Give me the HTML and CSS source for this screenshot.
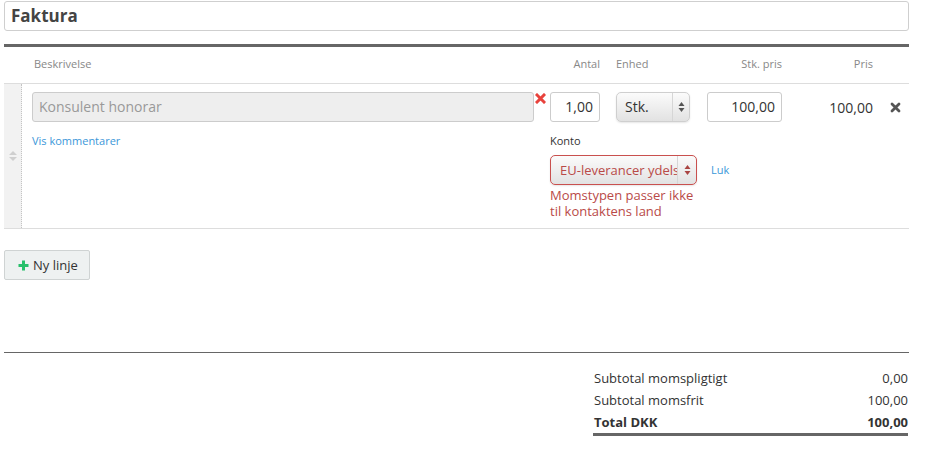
FILE: index.html
```html
<!DOCTYPE html>
<html>
<head>
<meta charset="utf-8">
<link rel="stylesheet" href="styles.css">
</head>
<body>
<div class="page">
  <div class="title-input">Faktura</div>
  <div class="thick-rule"></div>

  <div class="lines">
    <div class="head">
      <div class="h-desc">Beskrivelse</div>
      <div class="h-antal">Antal</div>
      <div class="h-enhed">Enhed</div>
      <div class="h-stk">Stk. pris</div>
      <div class="h-pris">Pris</div>
    </div>

    <div class="line">
      <div class="handle">
        <svg width="10" height="12" viewBox="0 0 10 12"><path d="M1 5 L5 1 L9 5 Z M1 7 L9 7 L5 11 Z" fill="#cfcfcf"/></svg>
      </div>
      <div class="line-body">
        <div class="r1">
          <div class="c-desc"><div class="inp inp-desc">Konsulent honorar</div></div>
          <div class="c-err">
            <svg width="11" height="11" viewBox="0 0 11 11"><path d="M2 2 L9 9 M9 2 L2 9" stroke="#e8423c" stroke-width="3" stroke-linecap="square"/></svg>
          </div>
          <div class="c-antal"><div class="inp num">1,00</div></div>
          <div class="c-enhed">
            <div class="sel">
              <span class="sel-text">Stk.</span>
              <span class="sel-arrow"><svg width="7" height="12" viewBox="0 0 7 12"><path d="M0.5 5 L3.5 1 L6.5 5 Z M0.5 7 L6.5 7 L3.5 11 Z" fill="#555"/></svg></span>
            </div>
          </div>
          <div class="c-stk"><div class="inp num">100,00</div></div>
          <div class="c-pris">100,00</div>
          <div class="c-del">
            <svg width="11" height="11" viewBox="0 0 11 11"><path d="M2 2 L9 9 M9 2 L2 9" stroke="#555" stroke-width="2.8" stroke-linecap="round"/></svg>
          </div>
        </div>
        <div class="r2">
          <div class="c-desc"><a class="link">Vis kommentarer</a></div>
          <div class="konto">
            <div class="konto-label">Konto</div>
            <div class="konto-row">
              <div class="sel sel-err">
                <span class="sel-text">EU-leverancer ydels</span>
                <span class="sel-arrow"><svg width="7" height="12" viewBox="0 0 7 12"><path d="M0.5 5 L3.5 1 L6.5 5 Z M0.5 7 L6.5 7 L3.5 11 Z" fill="#a94442"/></svg></span>
              </div>
              <a class="link luk">Luk</a>
            </div>
            <div class="err-text">Momstypen passer ikke til kontaktens land</div>
          </div>
        </div>
      </div>
    </div>
  </div>

  <div class="btn">
    <svg width="11" height="11" viewBox="0 0 11 11"><path d="M5.5 0.5 V10.5 M0.5 5.5 H10.5" stroke="#27c06a" stroke-width="3"/></svg>
    <span>Ny linje</span>
  </div>

  <div class="thin-rule"></div>

  <div class="totals-wrap">
    <div class="totals">
      <div class="t-row"><span>Subtotal momspligtigt</span><span>0,00</span></div>
      <div class="t-row"><span>Subtotal momsfrit</span><span>100,00</span></div>
      <div class="t-row t-total"><span>Total DKK</span><span>100,00</span></div>
    </div>
  </div>
</div>
</body>
</html>
```

FILE: styles.css
```css
* { box-sizing: border-box; }
html, body { margin: 0; padding: 0; background: #fff; }
body {
  font-family: "Open Sans", "Liberation Sans", sans-serif;
  color: #333;
  font-size: 14px;
}
.page {
  width: 909px;
  padding: 1px 0 0 4px;
}
.title-input {
  height: 30px;
  border: 1px solid #cfcfcf;
  border-radius: 3px;
  padding: 0 6px;
  font-size: 17px;
  font-weight: 700;
  line-height: 28px;
  color: #444;
}
.thick-rule {
  margin-top: 13px;
  height: 3px;
  background: #666;
}

/* header */
.head {
  display: grid;
  grid-template-columns: 30px 496px 70px 96px 86px 91px 36px;
  height: 37px;
  padding-bottom: 3px;
  align-items: center;
  font-size: 11px;
  color: #888;
  border-bottom: 1px solid #ddd;
}
.h-desc { grid-column: 2; }
.h-antal { grid-column: 3; text-align: right; }
.h-enhed { grid-column: 4; padding-left: 16px; }
.h-stk { grid-column: 5; text-align: right; }
.h-pris { grid-column: 6; text-align: right; }

/* line */
.line {
  display: flex;
  border-bottom: 1px solid #ddd;
}
.handle {
  width: 18px;
  background: #f2f2f2;
  border-right: 1px dotted #c4c4c4;
  display: flex;
  justify-content: center;
  align-items: center;
  padding-left: 1px;
}
.line-body {
  flex: 1;
  padding: 8px 0 9px 0;
}
.r1, .r2 {
  display: grid;
  grid-template-columns: 10px 502px 16px 50px 16px 74px 17px 75px 91px 36px;
}
.r1 { align-items: center; height: 30px; }
.c-desc { grid-column: 2; }
.c-err { grid-column: 3; align-self: start; padding: 1px 0 0 1px; }
.c-err svg { display: block; }
.c-antal { grid-column: 4; }
.c-enhed { grid-column: 6; }
.c-stk { grid-column: 8; }
.c-pris { grid-column: 9; text-align: right; font-size: 14px; color: #333; }
.c-del { grid-column: 10; display: flex; justify-content: center; padding-left: 8px; }
.c-del svg { display: block; }

.inp {
  height: 30px;
  border: 1px solid #ccc;
  border-radius: 3px;
  padding: 0 6px;
  line-height: 28px;
  font-size: 14px;
  background: #fff;
}
.inp-desc {
  background: #eee;
  color: #999;
  padding-left: 6px;
}
.num { text-align: right; color: #333; }

.sel {
  height: 30px;
  border: 1px solid #cfcfcf;
  border-radius: 5px;
  background: linear-gradient(#fbfbfb, #e2e2e2);
  box-shadow: 0 1px 2px rgba(0,0,0,0.1);
  display: flex;
  align-items: center;
  overflow: hidden;
  font-size: 14px;
}
.sel-text {
  flex: 1;
  padding-left: 8px;
  white-space: nowrap;
  overflow: hidden;
  line-height: 28px;
}
.sel-arrow {
  width: 17px;
  height: 28px;
  border-left: 1px solid #d6d6d6;
  display: flex;
  align-items: center;
  justify-content: center;
}

.r2 { margin-top: 8px; }
.link {
  font-size: 11px;
  color: #3b97d9;
  line-height: 18px;
  display: inline-block;
}
.konto {
  grid-column: 4 / 11;
  font-size: 11px;
  padding-top: 1px;
}
.konto-label { line-height: 19px; color: #333; }
.konto-row {
  margin-top: 5px;
  display: flex;
  align-items: center;
}
.sel-err {
  width: 147px;
  border-color: #c9504e;
  color: #b94a48;
  font-size: 13px;
}
.sel-err .sel-text { padding-left: 9px; }
.sel-err .sel-arrow { width: 19px; }
.luk { margin-left: 14px; }
.err-text {
  width: 150px;
  margin-top: 2px;
  font-size: 13px;
  line-height: 16px;
  color: #b94a48;
}

/* button */
.btn {
  margin-top: 21px;
  width: 86px;
  height: 30px;
  border: 1px solid #cfd3d3;
  border-radius: 2px;
  background: #eef1f1;
  display: flex;
  align-items: center;
  padding-left: 13px;
  gap: 4px;
  font-size: 13px;
  color: #333;
}
.btn svg { display: block; }

.thin-rule {
  margin-top: 72px;
  height: 1px;
  background: #666;
}

.totals-wrap {
  display: flex;
  justify-content: flex-end;
  padding-top: 14px;
  padding-right: 1px;
}
.totals {
  width: 315px;
  border-bottom: 3px solid #666;
  font-size: 13px;
}
.t-row {
  display: flex;
  justify-content: space-between;
  height: 22px;
  line-height: 22px;
  padding-left: 1px;
}
.t-total { font-weight: 700; }
```
